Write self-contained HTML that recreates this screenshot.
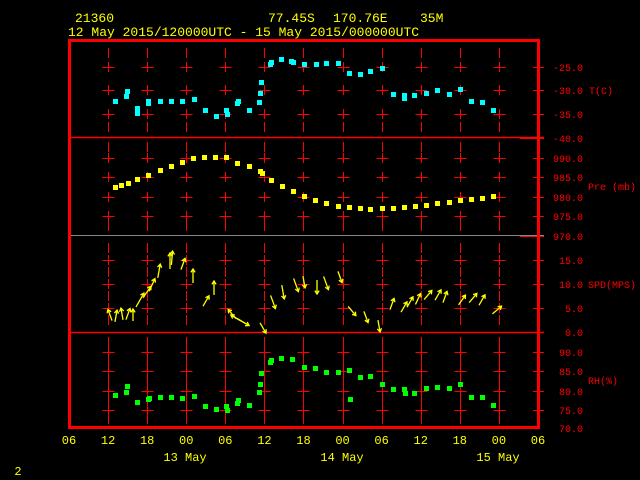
<!DOCTYPE html>
<html><head><meta charset="utf-8"><style>
html,body{margin:0;padding:0;background:#000;width:640px;height:480px;overflow:hidden}
svg{display:block}
.y{fill:#ff0;font-family:"Liberation Mono",monospace;font-size:13px}
.r{fill:#f00;font-family:"Liberation Mono",monospace;font-size:10px}
.ax{fill:#ff0;font-family:"Liberation Mono",monospace;font-size:12px}
</style></head><body>
<svg id="s" width="640" height="480" xmlns="http://www.w3.org/2000/svg">
<text class="y" x="75" y="22">21360</text>
<text class="y" x="268" y="22">77.45S</text>
<text class="y" x="333" y="22">170.76E</text>
<text class="y" x="420" y="22">35M</text>
<text class="y" x="68" y="36">12 May 2015/120000UTC - 15 May 2015/000000UTC</text>
<g id="grid" stroke="#f00" stroke-width="1"></g>
<line x1="69" y1="137.5" x2="544" y2="137.5" stroke="#f00" stroke-width="1.5"/>
<line x1="69" y1="235.5" x2="544" y2="235.5" stroke="#888" stroke-width="1"/>
<line x1="69" y1="332.5" x2="544" y2="332.5" stroke="#f00" stroke-width="1.5"/>
<rect x="69.5" y="40.5" width="469" height="387" fill="none" stroke="#f00" stroke-width="3"/>
<g class="r" text-anchor="end">
<text x="583" y="71">-25.0</text><text x="583" y="94">-30.0</text><text x="583" y="118">-35.0</text><text x="583" y="142">-40.0</text>
<text x="583" y="162">990.0</text><text x="583" y="181">985.0</text><text x="583" y="201">980.0</text><text x="583" y="220">975.0</text><text x="583" y="240">970.0</text>
<text x="583" y="264">15.0</text><text x="583" y="288">10.0</text><text x="583" y="312">5.0</text><text x="583" y="336">0.0</text>
<text x="583" y="356">90.0</text><text x="583" y="375">85.0</text><text x="583" y="395">80.0</text><text x="583" y="414">75.0</text><text x="583" y="432">70.0</text>
</g>
<g class="r">
<text x="589" y="94">T(C)</text><text x="588" y="190">Pre (mb)</text><text x="588" y="288">SPD(MPS)</text><text x="588" y="384">RH(%)</text>
</g>
<g id="xl" class="ax" text-anchor="middle"></g>
<g class="ax" text-anchor="middle">
<text x="185" y="461">13 May</text><text x="342" y="461">14 May</text><text x="498" y="461">15 May</text>
<text x="18" y="475">2</text></g>
<g id="pts"></g>
<g id="wind" stroke="#ff0" stroke-width="1.3" fill="none"></g>
</svg>
<script>
var NS="http://www.w3.org/2000/svg";
function el(p,t,a){var e=document.createElementNS(NS,t);for(var k in a)e.setAttribute(k,a[k]);document.getElementById(p).appendChild(e);return e;}
var cols=[];for(var i=0;i<13;i++)cols.push(69+i*39.08);
var crosses=[67,90,114,158,177,197,216,260,284,308,352,371,391,410];
var dashes=[53,127,147,226,248,272,296,320,342,362,381,401,419];
for(var i=1;i<12;i++){var x=Math.round(cols[i])+.5;
crosses.forEach(function(y){el("grid","line",{x1:x,y1:y-5,x2:x,y2:y+5});el("grid","line",{x1:x-6,y1:y+.5,x2:x+6,y2:y+.5});});
dashes.forEach(function(y){el("grid","line",{x1:x,y1:y-5,x2:x,y2:y+5});});}
crosses.concat([138,236,332]).forEach(function(y){var l=(y==138||y==236||y==332)?520:533;el("grid","line",{x1:l,y1:y+.5,x2:544,y2:y+.5});});
el("grid","line",{x1:533,y1:67.5,x2:544,y2:67.5});
var lab=["06","12","18","00","06","12","18","00","06","12","18","00","06"];
lab.forEach(function(t,i){var e=el("xl","text",{x:cols[i],y:444});e.textContent=t;});
var T=[[115,101],[126,96],[127,91],[137,108],[137,113],[148,101],[148,103],[160,101],[171,101],[182,101],[194,99],[205,110],[216,116],[226,110],[227,114],[238,101],[237,103],[249,110],[259,102],[260,93],[261,82],[270,64],[271,62],[281,59],[291,61],[293,62],[304,64],[316,64],[326,63],[338,63],[349,73],[360,74],[370,71],[382,68],[393,94],[404,95],[404,98],[414,95],[426,93],[437,90],[449,94],[460,89],[471,101],[482,102],[493,110]];
T.forEach(function(p){el("pts","rect",{x:p[0]-2,y:p[1]-2,width:5,height:5,fill:"#0ff"});});
var P=[[115,187],[121,185],[128,183],[137,179],[148,175],[160,170],[171,166],[182,162],[193,158],[204,157],[215,157],[226,157],[237,163],[249,166],[260,171],[262,173],[271,180],[282,186],[293,191],[304,196],[315,200],[326,203],[338,206],[349,207],[360,208],[370,209],[382,208],[393,208],[404,207],[415,206],[426,205],[437,203],[449,202],[460,200],[471,199],[482,198],[493,196]];
P.forEach(function(p){el("pts","rect",{x:p[0]-2,y:p[1]-2,width:5,height:5,fill:"#ff0"});});
var R=[[115,395],[126,392],[127,386],[137,402],[148,399],[149,398],[160,397],[171,397],[182,398],[194,396],[205,406],[216,409],[226,406],[227,410],[237,403],[238,400],[249,405],[259,392],[260,384],[261,373],[270,362],[271,360],[281,358],[292,359],[304,367],[315,368],[326,372],[338,372],[349,370],[350,399],[360,377],[370,376],[382,384],[393,389],[404,389],[405,393],[414,393],[426,388],[437,387],[449,388],[460,384],[471,397],[482,397],[493,405]];
R.forEach(function(p){el("pts","rect",{x:p[0]-2,y:p[1]-2,width:5,height:5,fill:"#0f0"});});
// wind: x,y(center), angle deg (direction arrow points, 0=up, clockwise), len
var W=[[110,315,-20,12],[116,316,10,12],[122,314,-10,12],[128,314,20,12],[133,315,0,12],[140,300,30,16],[147,292,35,14],[152,285,25,14],[159,271,10,14],[170,261,0,16],[172,258,5,14],[183,264,20,12],[193,276,0,14],[206,301,30,12],[214,288,0,14],[232,314,-40,12],[236,318,-60,12],[243,322,120,14],[263,328,150,12],[273,302,160,14],[283,292,170,14],[296,285,160,14],[304,282,170,12],[317,287,180,14],[326,283,160,14],[340,277,160,12],[352,311,140,12],[366,317,160,12],[379,326,170,12],[392,304,20,12],[404,307,30,12],[410,302,30,12],[418,299,25,12],[428,295,40,12],[438,295,30,12],[445,297,20,12],[462,300,35,12],[473,298,40,12],[482,300,30,12],[497,310,50,12]];
W.forEach(function(w){var a=w[2]*Math.PI/180,L=w[3]/2,dx=Math.sin(a),dy=-Math.cos(a);
var x1=w[0]-dx*L,y1=w[1]-dy*L,x2=w[0]+dx*L,y2=w[1]+dy*L;
var h=4,b1=a+Math.PI*0.82,b2=a-Math.PI*0.82;
el("wind","path",{d:"M"+x1+" "+y1+"L"+x2+" "+y2+"M"+(x2+Math.sin(b1)*h)+" "+(y2-Math.cos(b1)*h)+"L"+x2+" "+y2+"L"+(x2+Math.sin(b2)*h)+" "+(y2-Math.cos(b2)*h)});});
</script>
</body></html>
